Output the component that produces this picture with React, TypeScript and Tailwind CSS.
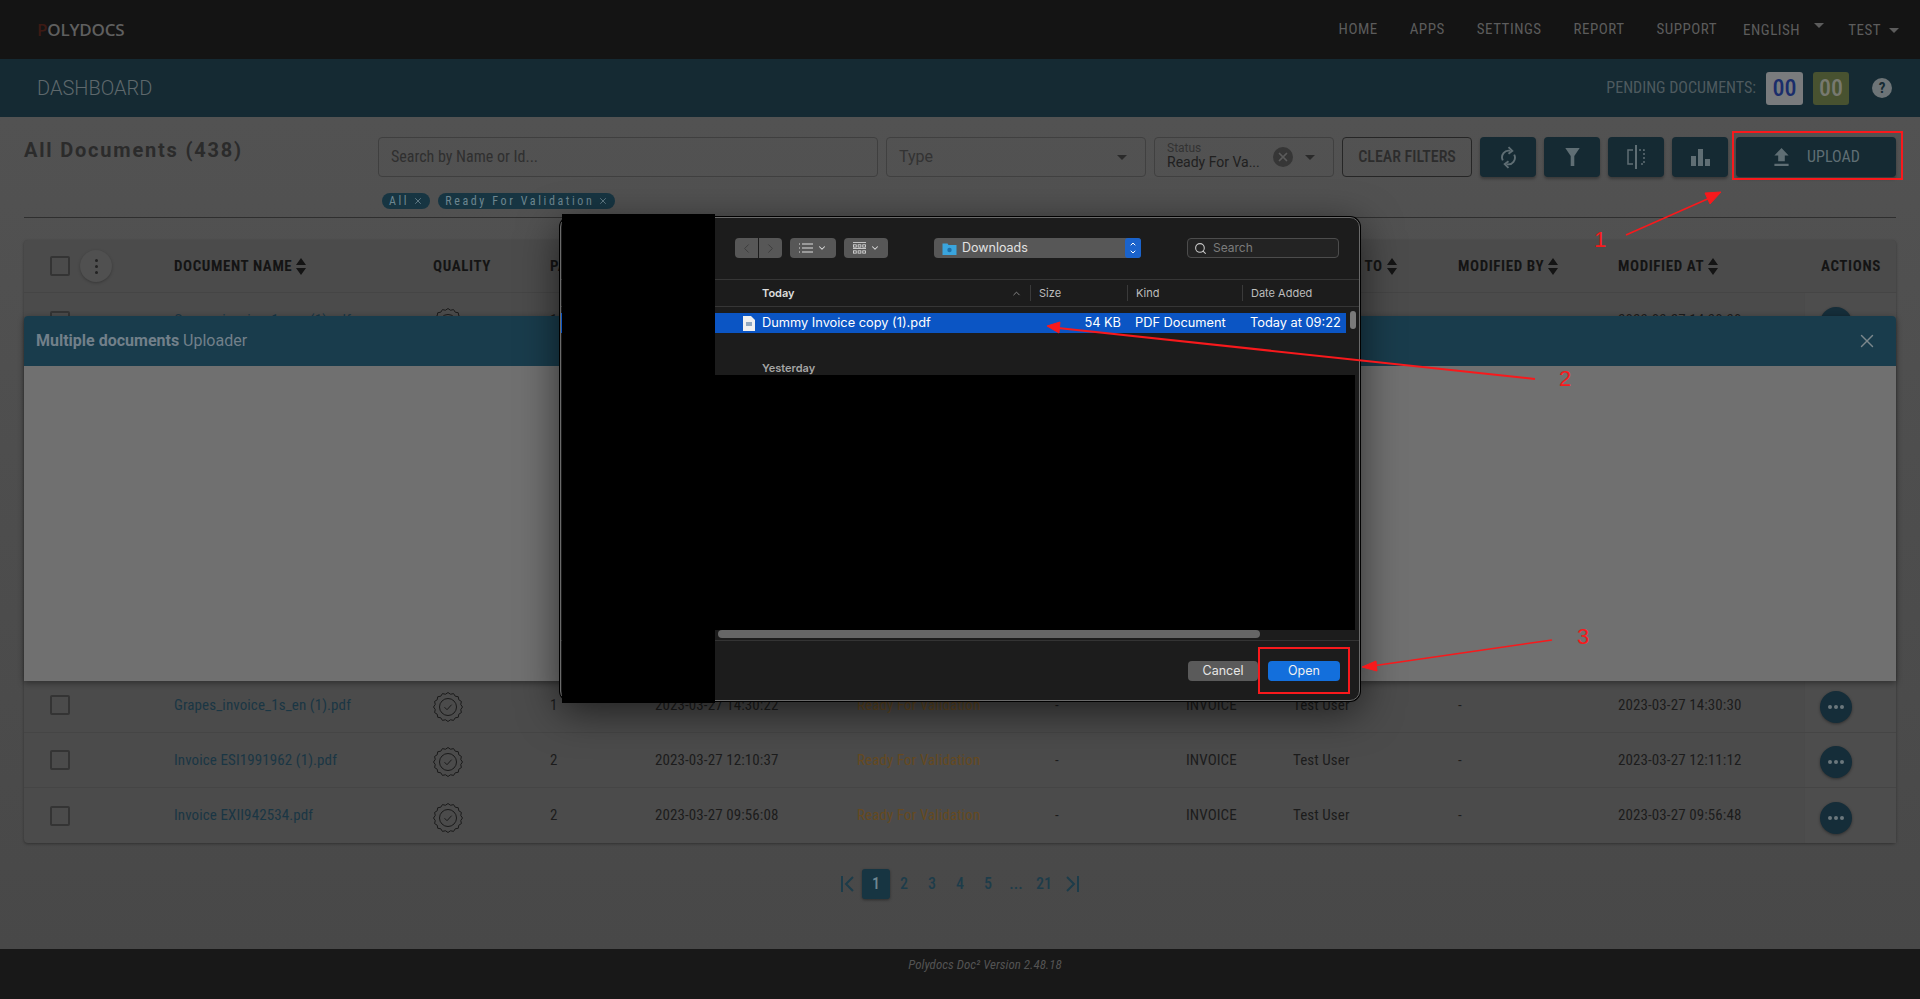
import { ChevronDown, ChevronLeft, ChevronRight, ChevronUp, Search, X } from "lucide-react";

interface Doc {
  name: string;
  pages: string;
  created: string;
  modified: string;
}

const docs: Doc[] = [
  { name: "Grapes_invoice_1s_en (1).pdf", pages: "1", created: "2023-03-27 14:30:22", modified: "2023-03-27 14:30:30" },
  { name: "Invoice ESI1991962 (1).pdf", pages: "2", created: "2023-03-27 12:10:37", modified: "2023-03-27 12:11:12" },
  { name: "Invoice EXII942534.pdf", pages: "2", created: "2023-03-27 09:56:08", modified: "2023-03-27 09:56:48" },
];

const navItems = ["HOME", "APPS", "SETTINGS", "REPORT", "SUPPORT"];
const columns = "grid grid-cols-[150px_259px_117px_105px_202px_198px_131px_107px_165px_160px_186px_92px]";

function Caret({ className }: { className: string }) {
  return (
    <svg viewBox="0 0 10 5" className={className} fill="currentColor">
      <path d="M0 0h10L5 5z" />
    </svg>
  );
}

function SortArrows() {
  return (
    <svg viewBox="0 0 10 17" className="ml-1 h-[17px] w-[10px] text-[#141414]" fill="currentColor">
      <path d="M5 0l5 7H0zM5 17l-5-7h10z" />
    </svg>
  );
}

function QualityBadge() {
  const points: string[] = [];
  for (let i = 0; i < 32; i++) {
    const r = i % 2 === 0 ? 14.5 : 13;
    const a = (i * Math.PI) / 16 - Math.PI / 2;
    points.push(`${15 + r * Math.cos(a)},${15 + r * Math.sin(a)}`);
  }
  return (
    <svg viewBox="0 0 30 30" className="h-[30px] w-[30px] text-[#1a1a1a]" fill="none" stroke="currentColor" strokeWidth="1">
      <polygon points={points.join(" ")} />
      <circle cx="15" cy="15" r="8.5" />
      <path d="M11.5 15.2l2.5 2.5 4.6-5" />
    </svg>
  );
}

function Checkbox() {
  return <div className="h-5 w-5 rounded-[2px] border-2 border-[#343434]" />;
}

function ActionButton() {
  return (
    <div className="flex h-8 w-8 items-center justify-center gap-[2px] rounded-full bg-[#152d39] shadow-[0_1px_3px_rgba(0,0,0,0.4)]">
      <span className="h-1 w-1 rounded-full bg-[#6b777c]" />
      <span className="h-1 w-1 rounded-full bg-[#6b777c]" />
      <span className="h-1 w-1 rounded-full bg-[#6b777c]" />
    </div>
  );
}

function Row({ doc }: { doc: Doc }) {
  return (
    <div className={`${columns} h-[55px] items-center border-b border-[#454545] text-[15px] tracking-[0.1px] text-[#1c1c1c] last:border-b-0`}>
      <div className="pl-[26px]">
        <Checkbox />
      </div>
      <div className="truncate text-[#1a3644]">{doc.name}</div>
      <div className="pt-1">
        <QualityBadge />
      </div>
      <div>{doc.pages}</div>
      <div className="whitespace-nowrap">{doc.created}</div>
      <div className="text-[#664a20]">Ready For Validation</div>
      <div>-</div>
      <div>INVOICE</div>
      <div>Test User</div>
      <div>-</div>
      <div>{doc.modified}</div>
      <div className="flex h-full items-center border-l border-[#4a4a4a] bg-[#4d4d4d] pl-[15px] pt-1">
        <ActionButton />
      </div>
    </div>
  );
}

function IconButton({ children }: { children: React.ReactNode }) {
  return (
    <button className="flex h-10 w-14 items-center justify-center rounded bg-[#152a33] text-[#5f6e74] shadow-[0_2px_3px_rgba(0,0,0,0.3)]">
      {children}
    </button>
  );
}

function FileDialog() {
  return (
    <div className="absolute left-[560px] top-[217px] flex h-[484px] w-[800px] flex-col rounded-[10px] border border-[#6a6a6a] bg-[#1c1c1c] font-['Inter',sans-serif] [font-stretch:100%] shadow-[0_0_0_1px_#000,0_10px_40px_rgba(0,0,0,0.6)]">
      <div className="flex h-[61px] items-center pb-[1px] pl-[174px]">
        <div className="flex gap-[1px]">
          <div className="flex h-5 w-[23px] items-center justify-center rounded-l bg-[#575757] text-[#3c3c3c]">
            <ChevronLeft size={15} strokeWidth={1.5} />
          </div>
          <div className="flex h-5 w-[23px] items-center justify-center rounded-r bg-[#575757] text-[#3c3c3c]">
            <ChevronRight size={15} strokeWidth={1.5} />
          </div>
        </div>
        <div className="ml-2 flex h-5 w-[46px] items-center justify-center gap-1 rounded bg-[#575757] text-[#dedede]">
          <svg viewBox="0 0 14 10" className="h-[10px] w-[14px]" stroke="currentColor" fill="none">
            <path d="M3 1h11M3 5h11M3 9h11M0 1h1M0 5h1M0 9h1" />
          </svg>
          <ChevronDown size={10} strokeWidth={2.5} />
        </div>
        <div className="ml-2 flex h-5 w-[44px] items-center justify-center gap-1 rounded bg-[#575757] text-[#dedede]">
          <svg viewBox="0 0 14 14" className="h-[13px] w-[13px]" stroke="currentColor" fill="none" strokeWidth="0.9">
            <path d="M0 .5h14M0 7h14" />
            <rect x="0.5" y="3" width="3" height="2.5" />
            <rect x="5.5" y="3" width="3" height="2.5" />
            <rect x="10.5" y="3" width="3" height="2.5" />
            <rect x="0.5" y="9.5" width="3" height="2.5" />
            <rect x="5.5" y="9.5" width="3" height="2.5" />
            <rect x="10.5" y="9.5" width="3" height="2.5" />
          </svg>
          <ChevronDown size={10} strokeWidth={2.5} />
        </div>
        <div className="ml-[46px] flex h-5 w-[207px] items-center rounded bg-[#575757] pl-2 text-[12.5px] text-[#e2e2e2]">
          <svg viewBox="0 0 14 13" className="mr-[5px] h-[13px] w-[15px]">
            <path d="M0 1.5h5l1 1.5h8v10H0z" fill="#3aa5de" />
            <circle cx="7" cy="8" r="2.2" fill="#1d6fa8" />
          </svg>
          <span>Downloads</span>
          <div className="ml-auto flex h-5 w-4 flex-col items-center justify-center rounded-[3px] bg-[#1a63cc] text-white">
            <ChevronUp size={8} strokeWidth={3} />
            <ChevronDown size={8} strokeWidth={3} />
          </div>
        </div>
        <div className="ml-[46px] flex h-5 w-[152px] items-center gap-[6px] rounded border border-[#4c4c4c] bg-[#232323] pl-1.5 text-[12px] text-[#7b7b7b]">
          <Search size={13} className="text-[#c8c8c8]" />
          <span>Search</span>
        </div>
      </div>
      <div className="flex h-7 items-center border-y border-[#363636] text-[11px] text-[#bdbdbd]">
        <div className="flex w-[469px] items-center pl-[201px] font-semibold text-[#dcdcdc]">
          <span>Today</span>
          <ChevronUp size={11} className="ml-auto mr-2 text-[#8d8d8d]" />
        </div>
        <div className="h-4 w-[97px] border-l border-[#3a3a3a] pl-2">Size</div>
        <div className="h-4 w-[115px] border-l border-[#3a3a3a] pl-2">Kind</div>
        <div className="h-4 border-l border-[#3a3a3a] pl-2">Date Added</div>
      </div>
      <div className="mt-[6px] flex h-5 w-[785px] items-center bg-[#0b55c4] pl-[182px] text-[12.8px] text-white">
        <svg viewBox="0 0 12 15" className="mr-[7px] h-[15px] w-[12px]">
          <path d="M0 0h8l4 4v11H0z" fill="#f0f0f0" />
          <path d="M3 7h6M3 9h6" stroke="#33608f" />
        </svg>
        <span className="w-[303px] whitespace-nowrap">Dummy Invoice copy (1).pdf</span>
        <span className="w-[56px] text-right">54 KB</span>
        <span className="ml-[14px] w-[115px] whitespace-nowrap">PDF Document</span>
        <span className="whitespace-nowrap">Today at 09:22</span>
      </div>
      <div className="pl-[201px] pt-[27px] text-[11px] font-semibold text-[#a5a5a5]">Yesterday</div>
      <div className="mt-auto flex h-[60px] items-start justify-end gap-[10px] border-t border-[#333] pr-[19px] pt-[20px] text-[12.5px]">
        <div className="flex h-5 w-[70px] items-center justify-center rounded bg-[#5a5a5a] text-[#e6e6e6]">Cancel</div>
        <div className="flex h-5 w-[72px] items-center justify-center rounded bg-[#136fdc] text-[#f0f0f0]">Open</div>
      </div>
      {/* redacted parts of the picker */}
      <div className="absolute left-[1px] top-[-4px] h-[489px] w-[153px] bg-black" />
      <div className="absolute left-[154px] top-[157px] h-[255px] w-[640px] bg-black" />
      <div className="absolute left-[157px] top-[412px] h-2 w-[542px] rounded-full bg-[#666]" />
      <div className="absolute left-[789px] top-[93px] h-[18px] w-[6px] rounded bg-[#7a7a7a]" />
    </div>
  );
}

function Annotations() {
  return (
    <>
      <div className="absolute left-[1732px] top-[131px] h-[49px] w-[171px] border-2 border-[#f8191c]" />
      <div className="absolute left-[1258px] top-[647px] h-[47px] w-[92px] border-2 border-[#f8191c]" />
      <svg viewBox="0 0 1920 999" className="pointer-events-none absolute left-0 top-0 h-[999px] w-[1920px]" fill="#f8191c" stroke="#f8191c">
        <path d="M1626 235L1712 197" strokeWidth="1.6" />
        <path d="M1721 192L1705 193L1710 204z" />
        <path d="M1535 379L1058 328" strokeWidth="2" />
        <path d="M1047 326L1060 322L1059 333z" />
        <path d="M1552 640L1372 666" strokeWidth="1.6" />
        <path d="M1362 667L1376 661L1377 671z" />
      </svg>
      <span className="absolute left-[1594px] top-[226px] font-['Liberation_Sans',sans-serif] text-[22px] leading-[28px] text-[#f8191c]">1</span>
      <span className="absolute left-[1559px] top-[365px] font-['Liberation_Sans',sans-serif] text-[22px] leading-[28px] text-[#f8191c]">2</span>
      <span className="absolute left-[1577px] top-[623px] font-['Liberation_Sans',sans-serif] text-[22px] leading-[28px] text-[#f8191c]">3</span>
    </>
  );
}

export default function App() {
  return (
    <div className="relative flex h-[999px] w-[1920px] flex-col overflow-hidden bg-[#4b4b4b] font-['Roboto',sans-serif] [font-stretch:75%]">
      <header className="flex h-[59px] shrink-0 items-center justify-between bg-[#141414] pl-[37px] pr-[21px]">
        <div className="flex items-center font-['Open_Sans',sans-serif] text-[17px] font-semibold tracking-[-0.2px] text-[#5f5f5f] [font-stretch:100%]">
          <span className="text-[#3d1a14]">P</span>OLYDOCS
        </div>
        <nav className="flex items-center text-[15px] tracking-[0.5px] text-[#5c5c5c]">
          <div className="flex gap-[32px]">
            {navItems.map((item) => (
              <span key={item}>{item}</span>
            ))}
          </div>
          <div className="ml-[26px] flex items-start pt-[2px]">
            <span>ENGLISH</span>
            <Caret className="ml-[14px] mt-[4px] h-[5px] w-[10px]" />
          </div>
          <div className="ml-[24px] flex items-center pt-[2px]">
            <span>TEST</span>
            <Caret className="ml-2 h-[5px] w-[10px]" />
          </div>
        </nav>
      </header>

      <div className="flex h-[58px] shrink-0 items-center justify-between bg-[#152a33] pl-[37px] pr-[28px]">
        <span className="text-[20px] font-light text-[#5e686c] [font-stretch:100%]">DASHBOARD</span>
        <div className="flex items-center text-[16px] text-[#4e5a5f]">
          <span>PENDING DOCUMENTS:</span>
          <div className="ml-[10px] flex h-[33px] w-[37px] items-center justify-center rounded-[3px] bg-[#797b7d] text-[24px] font-medium text-[#1a2d6b]">00</div>
          <div className="ml-[10px] flex h-[33px] w-[36px] items-center justify-center rounded-[3px] bg-[#485230] text-[24px] font-medium text-[#77796f]">00</div>
          <div className="ml-[23px] flex h-5 w-5 items-center justify-center rounded-full bg-[#6d7477] text-[15px] font-bold text-[#152a33]">?</div>
        </div>
      </div>

      <main className="flex flex-1 flex-col bg-gradient-to-b from-[#525252] to-[#484848] px-6">
        <div className="flex h-[101px] shrink-0 items-start justify-between border-b border-[#2f2f2f] pt-5">
          <h1 className="mt-[1px] text-[20px] font-bold leading-[24px] tracking-[1.8px] text-[#2b2b2b] [font-stretch:100%]">All Documents (438)</h1>
          <div>
            <div className="flex gap-2">
              <div className="flex h-10 w-[500px] items-center rounded border border-[#3f3f3f] pl-3 text-[16px] text-[#2f2f2f]">Search by Name or Id...</div>
              <div className="flex h-10 w-[260px] items-center justify-between rounded border border-[#404040] pl-3 pr-[18px] text-[16px] text-[#333] [font-stretch:100%]">
                <span>Type</span>
                <Caret className="h-[5px] w-[10px] text-[#2a2a2a]" />
              </div>
              <div className="flex h-10 w-[180px] items-center rounded border border-[#404040] pl-3 pr-[18px] [font-stretch:100%]">
                <div className="-mt-[3px] leading-none">
                  <div className="text-[12px] leading-[13px] text-[#333]">Status</div>
                  <div className="text-[14px] leading-[15px] text-[#202020]">Ready For Va...</div>
                </div>
                <div className="ml-auto flex h-5 w-5 items-center justify-center rounded-full bg-[#363636] text-[#5b5b5b]">
                  <X size={14} strokeWidth={3} />
                </div>
                <Caret className="ml-3 h-[5px] w-[10px] text-[#2a2a2a]" />
              </div>
              <button className="h-10 w-[130px] rounded border border-[#262626] text-[16px] font-medium text-[#2c2c2c]">CLEAR FILTERS</button>
              <IconButton>
                <svg viewBox="0 0 18 24" className="h-[23px] w-[17px]" fill="none" stroke="currentColor" strokeWidth="2">
                  <path d="M3 15a7 7 0 0 1 8-10M15 9a7 7 0 0 1-8 10" />
                  <path d="M9 1l4 4-4 3M9 23l-4-4 4-3" />
                </svg>
              </IconButton>
              <IconButton>
                <svg viewBox="0 0 16 20" className="h-[18px] w-[15px]" fill="currentColor">
                  <path d="M0 0h16L10 9v11H6V9z" />
                </svg>
              </IconButton>
              <IconButton>
                <svg viewBox="0 0 18 24" className="h-[24px] w-[18px]" fill="none" stroke="currentColor" strokeWidth="1.5">
                  <path d="M9 0v24" strokeWidth="2" />
                  <path d="M6 5H1v14h5" />
                  <path d="M12 5h5v14h-5" strokeDasharray="2 2" />
                </svg>
              </IconButton>
              <IconButton>
                <svg viewBox="0 0 19 17" className="h-[17px] w-[19px]" fill="currentColor">
                  <path d="M0 7h5v10H0zM7 0h5v17H7zM14 10h5v7h-5z" />
                </svg>
              </IconButton>
              <button className="flex h-10 w-40 items-center justify-center gap-[18px] rounded bg-[#152a33] pl-[2px] text-[16px] text-[#5f6e74] shadow-[0_2px_3px_rgba(0,0,0,0.3)]">
                <svg viewBox="0 0 15 19" className="h-[18px] w-[15px]" fill="currentColor">
                  <path d="M7.5 0L15 8h-4v6H4V8H0zM0 16.5h15V19H0z" />
                </svg>
                UPLOAD
              </button>
            </div>
            <div className="ml-1 mt-4 flex gap-2 text-[12px] tracking-[2.6px] text-[#6d8690]">
              <span className="flex h-[16px] items-center gap-1 rounded-full bg-[#173542] px-[7px]">
                All <X size={10} />
              </span>
              <span className="flex h-[16px] items-center gap-1 rounded-full bg-[#173542] px-[7px]">
                Ready For Validation <X size={10} />
              </span>
            </div>
          </div>
        </div>

        <div className="mt-[22px] rounded bg-[#4b4b4b] shadow-[0_1px_3px_rgba(0,0,0,0.35)]">
          <div className={`${columns} h-[53px] items-center border-b border-[#454545] text-[15px] font-bold tracking-[0.6px] text-[#141414]`}>
            <div className="flex items-center gap-[10px] pl-[26px]">
              <Checkbox />
              <div className="flex h-8 w-8 flex-col items-center justify-center gap-[3px] rounded-full bg-[#505050] shadow-[0_1px_3px_rgba(0,0,0,0.25)]">
                <span className="h-[3px] w-[3px] rounded-full bg-[#222]" />
                <span className="h-[3px] w-[3px] rounded-full bg-[#222]" />
                <span className="h-[3px] w-[3px] rounded-full bg-[#222]" />
              </div>
            </div>
            <div className="flex items-center">DOCUMENT NAME <SortArrows /></div>
            <div>QUALITY</div>
            <div>PAGES</div>
            <div className="col-span-4" />
            <div className="flex items-center whitespace-nowrap">ASSIGNED TO <SortArrows /></div>
            <div className="flex items-center">MODIFIED BY <SortArrows /></div>
            <div className="flex items-center">MODIFIED AT <SortArrows /></div>
            <div className="pl-[17px]">ACTIONS</div>
          </div>
          {/* rows under the uploader modal, only the first one peeks out */}
          <div className="h-[385px] overflow-hidden">
            <Row doc={docs[0]} />
          </div>
          {docs.map((doc) => (
            <Row key={doc.name} doc={doc} />
          ))}
        </div>

        <div className="mt-[26px] flex items-center justify-center text-[16px] font-medium text-[#1d3c4a]">
          <svg viewBox="0 0 14 16" className="mr-[7px] h-4 w-[14px]" fill="none" stroke="currentColor" strokeWidth="2">
            <path d="M1 0v16M12 1L5 8l7 7" />
          </svg>
          <div className="flex h-[30px] w-7 items-center justify-center rounded-[3px] bg-[#173542] text-[#6f8791] shadow-[0_1px_3px_rgba(0,0,0,0.4)]">1</div>
          {["2", "3", "4", "5", "...", "21"].map((page) => (
            <div key={page} className="flex h-[30px] w-7 items-center justify-center">{page}</div>
          ))}
          <svg viewBox="0 0 14 16" className="ml-[7px] h-4 w-[14px]" fill="none" stroke="currentColor" strokeWidth="2">
            <path d="M13 0v16M2 1l7 7-7 7" />
          </svg>
        </div>
      </main>

      <footer className="flex h-[50px] shrink-0 justify-center bg-[#181818] pl-[50px] pt-2 text-[13px] italic leading-[16px] text-[#535353]">
        Polydocs Doc² Version 2.48.18
      </footer>

      {/* uploader modal */}
      <div className="absolute left-6 top-[316px] flex h-[365px] w-[1872px] flex-col overflow-hidden rounded-t shadow-[0_2px_6px_rgba(0,0,0,0.4)]">
        <div className="flex h-[50px] items-center justify-between bg-[#193c4c] pl-3 pr-[18px] text-[16px] text-[#72808a] [font-stretch:100%]">
          <span>
            <b className="font-bold">Multiple documents</b> Uploader
          </span>
          <X size={22} strokeWidth={1.5} className="text-[#7c878c]" />
        </div>
        <div className="flex-1 bg-[#707070]" />
      </div>

      <FileDialog />
      <Annotations />
    </div>
  );
}
